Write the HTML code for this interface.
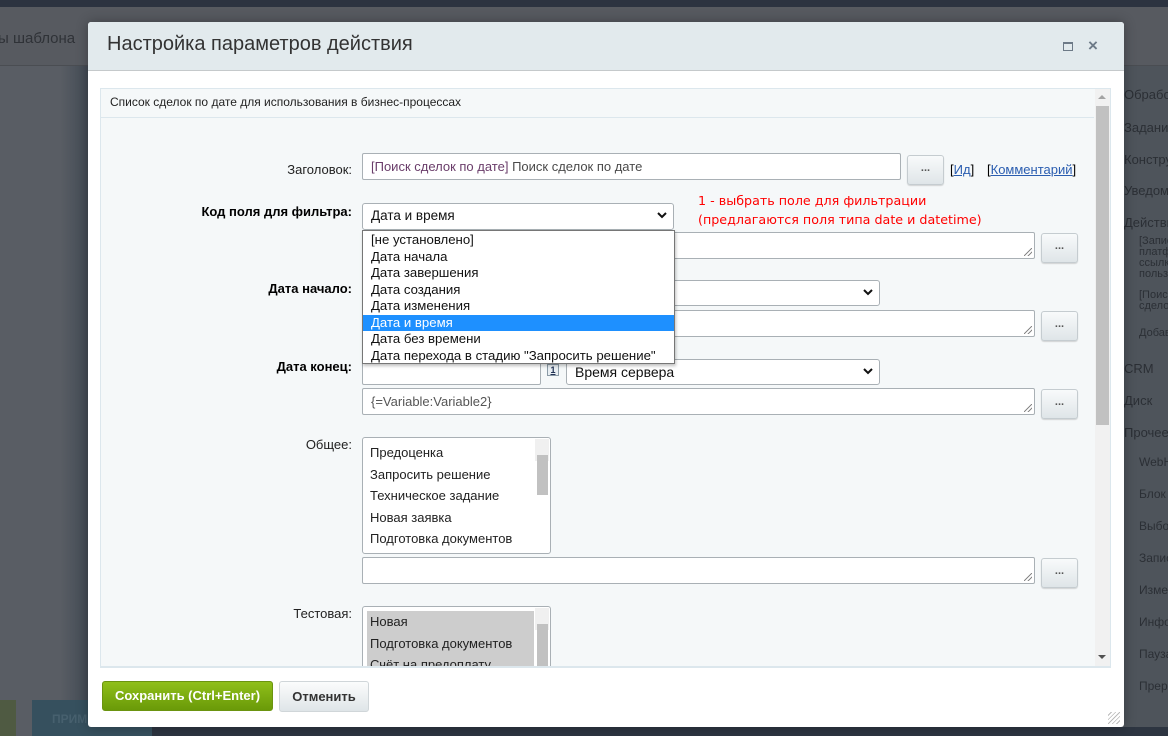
<!DOCTYPE html>
<html><head><meta charset="utf-8"><style>
*{box-sizing:border-box;margin:0;padding:0}
body{width:1168px;height:736px;overflow:hidden;background:#595d64;font-family:"Liberation Sans",sans-serif;position:relative}
.a{position:absolute}
.lbl{position:absolute;right:816px;font-size:13px;color:#222;text-align:right;white-space:nowrap}
.b{font-weight:bold;color:#000}
.inp{position:absolute;background:#fff;border:1px solid #a9b0b5;border-radius:2px;font-size:13px;color:#444;padding:5px 8px;white-space:nowrap}
.btn{position:absolute;width:37px;height:30px;border:1px solid #c5ccd0;border-radius:3px;background:linear-gradient(#f8fafb,#dfe5e8);box-shadow:0 1px 1px rgba(0,0,0,.15);font-size:11px;text-align:center;line-height:24px;color:#555;font-weight:bold}
.sel{position:absolute;background:#fff;border:1px solid #a9b0b5;border-radius:3px;font-size:14px;color:#111;padding:4px 8px}
.chev{position:absolute;right:5px;top:5px;width:12px;height:12px}
.rz{position:absolute;right:2px;bottom:2px;width:8px;height:8px;background:linear-gradient(135deg,transparent 45%,#888 45%,#888 55%,transparent 55%,transparent 70%,#888 70%,#888 80%,transparent 80%)}
.side{position:absolute;left:1124px;font-size:13px;color:#2b2f35;white-space:nowrap}
.lb{position:absolute;background:#fff;border:1px solid #a9b0b5;border-radius:3px;font-size:13px;color:#222;overflow:hidden}
.lb div{height:21.5px;line-height:21.5px;padding-left:7px}
.sb{position:absolute;right:1px;top:1px;width:14px;bottom:1px;background:#f0f0f0}
.dd div{height:16.5px;line-height:16px;padding-left:8px}
</style></head><body>
<div class="a" style="left:0;top:0;width:1168px;height:7px;background:#2c3340"></div>
<div class="a" style="left:0;top:7px;width:1168px;height:59px;background:#575a60;border-bottom:1px solid #4a4d52"></div>
<div class="a" style="left:0;top:30px;font-size:15px;color:#2f3237;left:-2px">ы шаблона</div>
<div class="a" style="left:60px;top:66px;width:30px;height:634px;background:linear-gradient(90deg,rgba(0,0,0,0),rgba(30,45,60,.4))"></div>
<div class="a" style="left:0;top:700px;width:16px;height:36px;background:#4f5a42"></div>
<div class="a" style="left:32px;top:700px;width:120px;height:36px;background:#36505e"></div>
<div class="a" style="left:52px;top:712px;font-size:12px;font-weight:bold;color:#47606e">ПРИМ</div>
<div class="a" style="left:152px;top:727px;width:1016px;height:9px;background:#2d3541"></div>
<div class="a" style="left:1124px;top:66px;width:44px;height:661px;background:#4e545b"></div>
<div class="side" style="top:87px">Обработка</div>
<div class="side" style="top:120px">Задания</div>
<div class="side" style="top:152px">Конструкции</div>
<div class="side" style="top:183px">Уведомления</div>
<div class="side" style="top:215px">Действия</div>
<div class="side" style="left:1139px;top:236px;font-size:11px;line-height:11px">[Запис<br>платф<br>ссылк<br>польз</div>
<div class="side" style="left:1139px;top:290px;font-size:11px;line-height:11px">[Поис<br>сделок</div>
<div class="side" style="left:1139px;top:327px;font-size:11px">Добав</div>
<div class="side" style="top:361px">CRM</div>
<div class="side" style="top:393px">Диск</div>
<div class="side" style="top:425px">Прочее</div>
<div class="side" style="left:1139px;top:455px;font-size:12px">WebHook</div>
<div class="side" style="left:1139px;top:487px;font-size:12px">Блок</div>
<div class="side" style="left:1139px;top:519px;font-size:12px">Выбор</div>
<div class="side" style="left:1139px;top:551px;font-size:12px">Запись</div>
<div class="side" style="left:1139px;top:583px;font-size:12px">Изменение</div>
<div class="side" style="left:1139px;top:615px;font-size:12px">Инфо</div>
<div class="side" style="left:1139px;top:647px;font-size:12px">Пауза</div>
<div class="side" style="left:1139px;top:679px;font-size:12px">Прерв</div>

<div class="a" style="left:88px;top:22px;width:1036px;height:705px;background:#fff;border-radius:3px;box-shadow:0 0 12px rgba(0,0,0,.3)">
 <div class="a" style="left:0;top:0;width:1036px;height:49px;background:#e2eaed;border-bottom:1px solid #c5c9cb;border-radius:3px 3px 0 0"></div>
 <div class="a" style="left:19px;top:11px;font-size:20px;color:#333">Настройка параметров действия</div>
 <div class="a" style="left:975px;top:20px;width:10px;height:9px;border:1.5px solid #6d7a87;border-top-width:2px"></div>
 <div class="a" style="left:1000px;top:14px;font-size:17px;color:#6d7a87;font-weight:bold">×</div>
 <div class="a" style="left:1020px;top:690px;width:12px;height:12px;background:repeating-linear-gradient(135deg,transparent 0 2px,#bbb 2px 3px)"></div>
</div>
<div class="a" style="left:100px;top:88px;width:1011px;height:579px;background:#f5f8f9;border:1px solid #dce7ed"></div>
<div class="a" style="left:101px;top:89px;width:993px;height:29px;border-bottom:1px solid #dce7ed;background:#f5f8f9"></div>
<div class="a" style="left:110px;top:95px;font-size:12px;color:#222">Список сделок по дате для использования в бизнес-процессах</div>
<div class="a" style="left:1095px;top:89px;width:15px;height:577px;background:#f1f1f1"></div>
<div class="a" style="left:1096px;top:106px;width:13px;height:319px;background:#c1c1c1"></div>
<div class="a" style="left:1098px;top:95px;width:0;height:0;border:4px solid transparent;border-bottom:4px solid #a3a3a3;border-top:0"></div>
<div class="a" style="left:1098px;top:655px;width:0;height:0;border:4px solid transparent;border-top:4px solid #505050;border-bottom:0"></div>

<div class="lbl" style="top:162px">Заголовок:</div>
<div class="inp" style="left:362px;top:153px;width:539px;height:27px;color:#4a4a4a"><span style="color:#6a3d6a">[Поиск сделок по дате]</span> Поиск сделок по дате</div>
<div class="btn" style="left:907px;top:155px">...</div>
<div class="a" style="left:950px;top:162px;font-size:13px"><span>[</span><span style="color:#2a5db0;text-decoration:underline">Ид</span><span>]</span></div>
<div class="a" style="left:987px;top:162px;font-size:13px"><span>[</span><span style="color:#2a5db0;text-decoration:underline">Комментарий</span><span>]</span></div>

<div class="lbl b" style="top:204px">Код поля для фильтра:</div>
<div class="sel" style="left:362px;top:203px;width:312px;height:27px;font-size:13.5px">Дата и время<svg class="chev" viewBox="0 0 12 12"><path d="M2 4l4 4 4-4" fill="none" stroke="#111" stroke-width="2"/></svg></div>
<div class="a" style="left:698px;top:191px;font-family:'DejaVu Sans',sans-serif;font-size:12.7px;line-height:19px;color:#f00">1 - выбрать поле для фильтрации<br>(предлагаются поля типа date и datetime)</div>

<div class="inp" style="left:362px;top:232px;width:673px;height:27px"><div class="rz"></div></div>
<div class="btn" style="left:1041px;top:233px">...</div>

<div class="lbl b" style="top:281px">Дата начало:</div>
<div class="inp" style="left:362px;top:280px;width:179px;height:26px"></div>
<div class="sel" style="left:566px;top:280px;width:314px;height:26px"><svg class="chev" viewBox="0 0 12 12"><path d="M2 4l4 4 4-4" fill="none" stroke="#111" stroke-width="2"/></svg></div>
<div class="inp" style="left:362px;top:310px;width:673px;height:27px"><div class="rz"></div></div>
<div class="btn" style="left:1041px;top:311px">...</div>

<div class="lbl b" style="top:359px">Дата конец:</div>
<div class="inp" style="left:362px;top:359px;width:179px;height:26px"></div>
<div class="a" style="left:547px;top:364px;width:12px;height:12px;border:1px solid #8a9aa6;background:#e8eef2;font-size:9px;font-weight:bold;color:#235;text-align:center;line-height:10px;text-decoration:underline">1</div>
<div class="sel" style="left:566px;top:359px;width:314px;height:26px">Время сервера<svg class="chev" viewBox="0 0 12 12"><path d="M2 4l4 4 4-4" fill="none" stroke="#111" stroke-width="2"/></svg></div>
<div class="inp" style="left:362px;top:388px;width:673px;height:27px;color:#555">{=Variable:Variable2}<div class="rz"></div></div>
<div class="btn" style="left:1041px;top:389px">...</div>

<div class="lbl" style="top:437px">Общее:</div>
<div class="lb" style="left:362px;top:437px;width:189px;height:117px;padding-top:4px"><div>Предоценка</div><div>Запросить решение</div><div>Техническое задание</div><div>Новая заявка</div><div>Подготовка документов</div><div class="sb"><div style="position:absolute;left:2px;top:16px;width:11px;height:40px;background:#c1c1c1;padding:0"></div></div></div>
<div class="inp" style="left:362px;top:557px;width:673px;height:27px"><div class="rz"></div></div>
<div class="btn" style="left:1041px;top:558px">...</div>

<div class="lbl" style="top:606px">Тестовая:</div>
<div class="lb" style="left:362px;top:606px;width:189px;height:60px;padding-top:4px;border-bottom:0;border-radius:3px 3px 0 0"><div style="background:#cdcdcd;margin:0 16px 0 4px;padding-left:3px">Новая</div><div style="background:#cdcdcd;margin:0 16px 0 4px;padding-left:3px">Подготовка документов</div><div style="background:#cdcdcd;margin:0 16px 0 4px;padding-left:3px">Счёт на предоплату</div><div class="sb"><div style="position:absolute;left:2px;top:16px;width:11px;height:50px;background:#c1c1c1;padding:0"></div></div></div>
<div class="a" style="left:100px;top:666px;width:1011px;height:2px;background:#dce7ed"></div>

<div class="a dd" style="left:362px;top:230px;width:313px;height:134px;background:#fff;border:1px solid #767676;box-shadow:1px 2px 3px rgba(0,0,0,.25);font-size:13.2px;color:#111;padding-top:1px">
 <div>[не установлено]</div>
 <div>Дата начала</div>
 <div>Дата завершения</div>
 <div>Дата создания</div>
 <div>Дата изменения</div>
 <div style="background:#1e90ff;color:#fff">Дата и время</div>
 <div>Дата без времени</div>
 <div>Дата перехода в стадию "Запросить решение"</div>
</div>

<div class="a" style="left:102px;top:681px;width:171px;height:30px;border-radius:3px;background:linear-gradient(#8fbf1a,#6a9a08);border:1px solid #6b9410;color:#fff;font-weight:bold;font-size:13px;text-align:center;line-height:28px">Сохранить (Ctrl+Enter)</div>
<div class="a" style="left:279px;top:681px;width:90px;height:31px;border-radius:3px;background:linear-gradient(#fbfcfc,#dfe5e8);border:1px solid #d0d6d9;color:#333;font-weight:bold;font-size:13px;text-align:center;line-height:29px">Отменить</div>
</body></html>
